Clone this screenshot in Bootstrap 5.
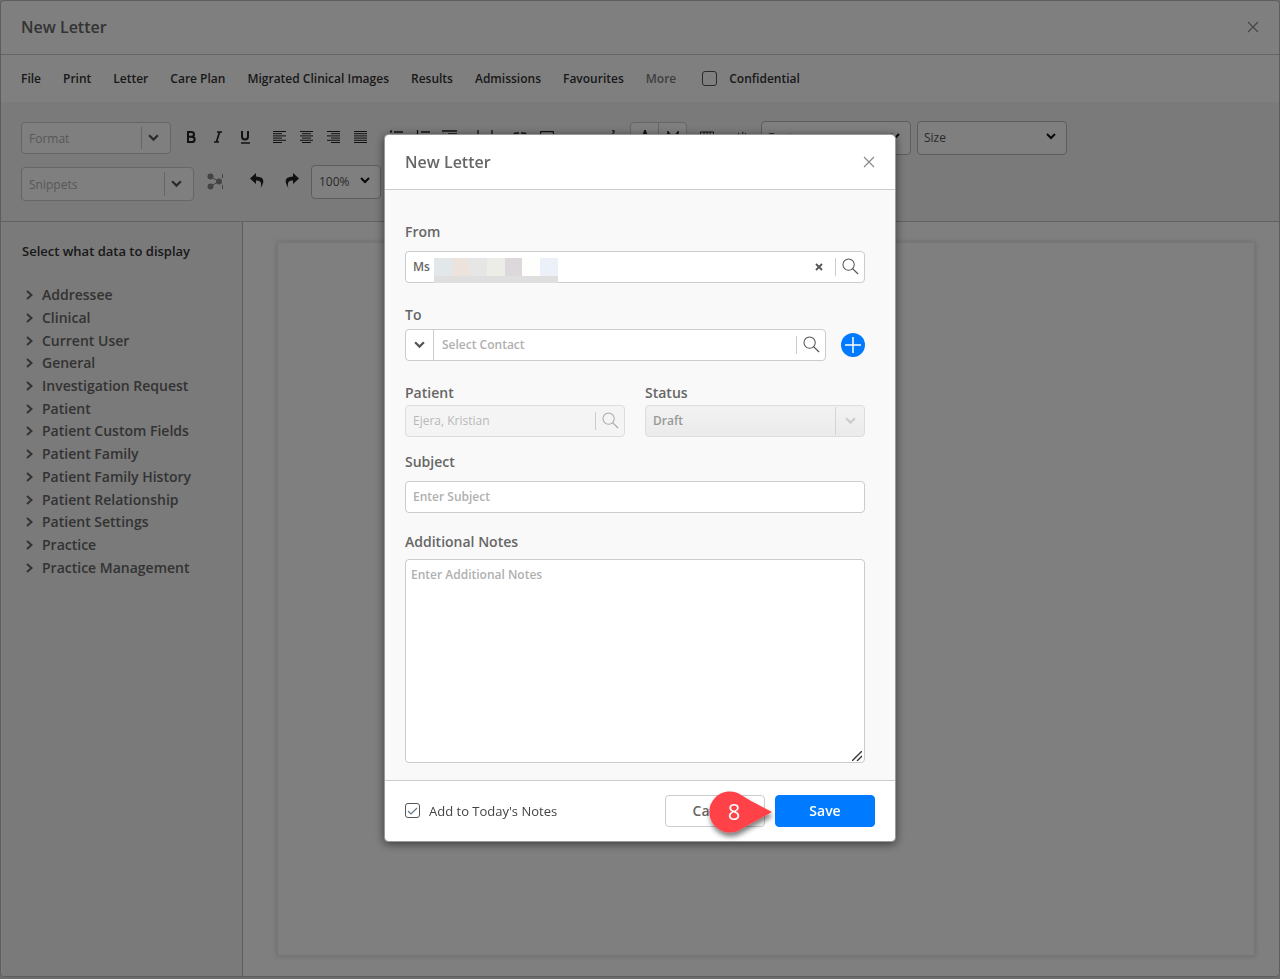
<!DOCTYPE html>
<html lang="en">
<head>
<meta charset="utf-8">
<meta name="viewport" content="width=device-width, initial-scale=1">
<title>New Letter</title>
<link rel="stylesheet" href="https://cdn.jsdelivr.net/npm/bootstrap@5.3.0/dist/css/bootstrap.min.css">
<style>
body{font-family:"Open Sans","Noto Sans",sans-serif;font-size:12px;line-height:20px;color:#222;background:#d8d8d8;min-height:100vh;padding-bottom:2px}
svg{display:block;flex:none}
.win{flex:1;background:#fff;border:1px solid #bbb;border-radius:4px;overflow:hidden}
.win-head{height:54px;padding:0 20px 1px;border-bottom:1px solid #c8c8c8}
.win-title{font-size:16px;line-height:24px;font-weight:600;color:#666;margin:0}
.icon-btn{background:none;border:0;padding:0;display:flex;align-items:center;justify-content:center;color:#555}
.close-btn{color:#888}
.menu-bar{height:47px;padding:0 20px;gap:22px;font-weight:600}
.menu-bar a,.menu-bar label{color:#333;text-decoration:none}
.menu-bar a.menu-more{color:#808080}
.tick{width:15px;height:15px;margin:0;border:1px solid #555;border-radius:3px;background-color:#fff}
.tick:checked{background-color:#fff;border-color:#555;background-size:13px 13px;background-image:url("data:image/svg+xml,%3Csvg xmlns='http://www.w3.org/2000/svg' viewBox='0 0 13 13'%3E%3Cpath d='M2 7l3 3 6-6' fill='none' stroke='%23678' stroke-width='1.2'/%3E%3C/svg%3E")}
.tools{background:#f4f4f4;height:120px;padding:19px 20px 0;border-bottom:1px solid #c4c4c4}
.tool-row{height:34px;margin-bottom:10px}
.tool{width:27px;height:28px;color:#222;padding-bottom:2px}
.near{margin-left:6px}
.mid{margin-left:14px}
.field{height:32px;border:1px solid #ccc;border-radius:4px;background:#fff;display:flex;align-items:center}
.field input{flex:1;min-width:0;border:0;background:none;padding:1px 0 0 7px;font-size:12px;line-height:20px;outline:0;color:#666}
.field input::placeholder,.notes::placeholder{color:#b0b0b0;opacity:1}
.cut{border-left:1px solid #ccc;align-self:stretch}
.combo-sm{width:150px}
.combo-md{width:173px;height:34px}
.combo-btn{width:28px;padding-right:5px}
.pick{height:34px;border:1px solid #bbb;border-radius:4px;background-color:#fff;font-size:12px;color:#555;padding:0 6px;background-image:url("data:image/svg+xml,%3Csvg xmlns='http://www.w3.org/2000/svg' viewBox='0 0 10 7'%3E%3Cpath d='M1 1l4 4 4-4' fill='none' stroke='%23111' stroke-width='2'/%3E%3C/svg%3E");background-size:10px 7px;background-position:right 10px top 11px}
.pick-wide{width:150px}
.pick-zoom{width:70px;padding-left:7px}
.side{width:241px;flex:none;background:#f4f4f4;border-right:1px solid #bbb;padding:19px 20px;margin-left:1px}
.side h2{font-size:13px;line-height:20px;font-weight:600;margin:0 0 23px;color:#333}
.tree{height:295px;font-size:14px}
.tree button{gap:8px;color:#666;padding-left:4px;font-weight:600}
.desk{padding:20px 24px 20px 34px}
.paper{background:#fff;border:1px solid #ececec;box-shadow:0 0 6px #d4d4d4}
.modal{padding-bottom:4px}
.dialog-w{max-width:512px}
.modal-content{border:1px solid #999;border-radius:4px;box-shadow:0 2px 10px rgba(0,0,0,.55)}
.modal-header{height:55px;padding:0 20px;border-bottom:1px solid #ccc}
.modal-body{background:#f9f9f9;padding:32px 30px 17px 20px}
.modal-footer{height:61px;padding:0 20px;border-top:1px solid #ccc;gap:10px}
.modal-footer>*{margin:0}
.lab{display:block;font-size:14px;line-height:20px;font-weight:600;color:#666}
.dlg-field input{font-weight:600}
.from-field,.subj-lab + .field{margin-top:9px}
.to-lab{margin:22px 0 4px}
.add-btn{margin-left:15px}
.pair{--bs-gutter-x:20px;margin-top:22px}
.pair .field,.status-box{margin-top:2px}
.subj-lab{margin-top:15px}
.notes-lab{margin:19px 0 7px}
.mark-line{width:1px;height:18px;background:#ccc}
.find{width:28px;height:30px}
.type-btn{width:27px}
.off{background:#f4f4f4;border-color:#ddd}
.off input{color:#b8b8b8}
.off .find{color:#aaa}
.draft{width:100%;height:32px;border:1px solid #ddd;border-radius:4px;background:linear-gradient(#f2f2f2,#ebebeb);color:#999;font-size:12px;font-weight:600;padding:1px 7px 0;opacity:1;appearance:none}
.draft-arrow{right:1px;top:2px;height:28px;width:29px;border-left:1px solid #d4d4d4;color:#ccc;pointer-events:none}
.notes{display:block;width:100%;height:204px;border:1px solid #ccc;border-radius:4px;padding:5px;font-size:12px;line-height:20px;font-weight:600;resize:none}
.grip{right:3px;bottom:2px}
.redacted{left:28px;top:6px}
.today-lab{font-size:13px;margin-left:9px;color:#444}
.act{width:100px;height:32px;padding:0;font-size:14px;line-height:20px;border-radius:4px;font-weight:600}
.act-cancel{background:#fff;border:1px solid #ccc;color:#666}
.act-save{background:#007bff;border-color:#007bff;color:#fff}
.callout{left:44px;top:-5px;pointer-events:none}
.callout span{left:18px;top:7px;width:14px;font-size:22px;line-height:28px;color:#fff;text-align:center}
</style>
</head>
<body class="d-flex flex-column">
<svg width="0" height="0" class="position-absolute" aria-hidden="true">
  <symbol id="down" viewBox="0 0 10 7"><path d="M1 1l4 4 4-4" fill="none" stroke="currentColor" stroke-width="2"/></symbol>
  <symbol id="right" viewBox="0 0 8 10"><path d="M1 1L5.500 5L1 9" fill="none" stroke="currentColor" stroke-width="2"/></symbol>
  <symbol id="close" viewBox="0 0 12 12"><path d="M1 1l10 10M11 1L1 11" fill="none" stroke="currentColor" stroke-width="1.100"/></symbol>
  <symbol id="search" viewBox="0 0 18 18"><circle cx="7" cy="7" r="6" fill="none" stroke="currentColor" stroke-width="1.100"/><path d="M11.200 11.200L17 17" fill="none" stroke="currentColor" stroke-width="1.300"/></symbol>
</svg>

<div class="win d-flex flex-column">
  <header class="win-head d-flex align-items-center justify-content-between">
    <h1 class="win-title">New Letter</h1>
    <button class="icon-btn close-btn" aria-label="Close window"><svg width="12" height="12"><use href="#close"/></svg></button>
  </header>
  <nav class="menu-bar d-flex align-items-center" aria-label="Letter menu">
    <a href="#">File</a><a href="#">Print</a><a href="#">Letter</a><a href="#">Care Plan</a><a href="#">Migrated Clinical Images</a><a href="#">Results</a><a href="#">Admissions</a><a href="#">Favourites</a><a href="#" class="menu-more">More</a>
    <span class="d-flex align-items-center ms-1"><input class="form-check-input tick" type="checkbox" id="conf"><label for="conf" class="ps-1 ms-2">Confidential</label></span>
  </nav>

  <div class="tools">
    <div class="tool-row d-flex align-items-center">
      <div class="field combo-sm"><input aria-label="Format" placeholder="Format"><span class="cut my-1"></span><button class="icon-btn combo-btn" aria-label="Format options"><svg width="11" height="8"><use href="#down"/></svg></button></div>
      <button class="icon-btn tool near" aria-label="Bold"><svg width="10" height="12" viewBox="0 0 10 12"><path d="M2 1h3q3 0 3 2.400t-3 2.400H2h3.400q3.300 0 3.300 2.600T5.400 11H2z" fill="none" stroke="currentColor" stroke-width="2"/></svg></button>
      <button class="icon-btn tool" aria-label="Italic"><svg width="10" height="12" viewBox="0 0 10 12"><path d="M4 1h5M1 11h5M6.500 1l-3 10" fill="none" stroke="currentColor" stroke-width="1.700"/></svg></button>
      <button class="icon-btn tool" aria-label="Underline"><svg width="10" height="13" viewBox="0 0 10 13"><path d="M2 0v5.500q0 3 3 3t3-3V0" fill="none" stroke="currentColor" stroke-width="2"/><path d="M1 12h9" stroke="currentColor" stroke-width="1.400"/></svg></button>
      <button class="icon-btn tool ms-2" aria-label="Align left"><svg width="13" height="12" viewBox="0 0 13 12"><path d="M0 .5h13M0 2.700h9M0 4.900h13M0 7.100h9M0 9.300h13M0 11.500h9" stroke="currentColor"/></svg></button>
      <button class="icon-btn tool" aria-label="Align centre"><svg width="13" height="12" viewBox="0 0 13 12"><path d="M0 .5h13M2 2.700h9M0 4.900h13M2 7.100h9M0 9.300h13M2 11.500h9" stroke="currentColor"/></svg></button>
      <button class="icon-btn tool" aria-label="Align right"><svg width="13" height="12" viewBox="0 0 13 12"><path d="M0 .5h13M4 2.700h9M0 4.900h13M4 7.100h9M0 9.300h13M4 11.500h9" stroke="currentColor"/></svg></button>
      <button class="icon-btn tool" aria-label="Justify"><svg width="13" height="12" viewBox="0 0 13 12"><path d="M0 .5h13M0 2.700h13M0 4.900h13M0 7.100h13M0 9.300h13M0 11.500h13" stroke="currentColor"/></svg></button>
      <button class="icon-btn tool ms-2" aria-label="Bullet list"><svg width="14" height="14" viewBox="0 0 14 14"><path d="M5 2h9M5 7h9M5 12h9" stroke="currentColor" stroke-width="1.500"/><path d="M1 1.500h2M1 7h2M1 12h2" stroke="currentColor" stroke-width="2"/></svg></button>
      <button class="icon-btn tool" aria-label="Numbered list"><svg width="14" height="14" viewBox="0 0 14 14"><path d="M5 2h9M5 7h9M5 12h9M1.500 0v5M1.500 8v5" stroke="currentColor" stroke-width="1.300"/></svg></button>
      <button class="icon-btn tool" aria-label="Indent"><svg width="15" height="14" viewBox="0 0 15 14"><path d="M0 1h15M6 4h9M6 7h9M0 11h15M1 4l3 2-3 2" fill="none" stroke="currentColor" stroke-width="1.500"/></svg></button>
      <button class="icon-btn tool ms-2" aria-label="Page break"><svg width="16" height="14" viewBox="0 0 16 14"><path d="M1 0v14M15 0v14M4 7h8" stroke="currentColor" stroke-width="1.300"/></svg></button>
      <button class="icon-btn tool ms-2" aria-label="Link"><svg width="14" height="10" viewBox="0 0 14 10"><path d="M6 7H3.500a3 3 0 010-6H6M8 1h2.500a3 3 0 010 6H8" fill="none" stroke="currentColor" stroke-width="1.500"/></svg></button>
      <button class="icon-btn tool" aria-label="Image"><svg width="14" height="12" viewBox="0 0 14 12"><rect x=".5" y=".5" width="13" height="11" rx="1" fill="none" stroke="currentColor" stroke-width="1.300"/></svg></button>
      <button class="icon-btn tool ms-2" aria-label="Subscript"><svg width="14" height="14" viewBox="0 0 14 14"><path d="M1 5l6 6M7 5l-6 6M10 9q3-1 2 1l-2 3h3" fill="none" stroke="currentColor" stroke-width="1.200"/></svg></button>
      <button class="icon-btn tool" aria-label="Superscript"><svg width="14" height="14" viewBox="0 0 14 14"><path d="M1 5l6 6M7 5l-6 6M10 1q3-1 2 1l-2 3h3" fill="none" stroke="currentColor" stroke-width="1.200"/></svg></button>
      <div class="field ms-2" role="group" aria-label="Colours"><button class="icon-btn tool" aria-label="Text colour"><svg width="12" height="14" viewBox="0 0 12 14"><path d="M2 11L6 1l4 10M4 8h4" fill="none" stroke="currentColor" stroke-width="2"/></svg></button><span class="cut"></span><button class="icon-btn tool" aria-label="Highlight"><svg width="12" height="12" viewBox="0 0 12 12"><path d="M1 11V1l5 7 5-7v10" fill="none" stroke="currentColor" stroke-width="1.600"/></svg></button></div>
      <button class="icon-btn tool near" aria-label="Table"><svg width="14" height="13" viewBox="0 0 14 13"><path d="M.5 1h13v11H.5zM4 1v12M7 1v12M10 1v12" fill="none" stroke="currentColor"/></svg></button>
      <button class="icon-btn tool ms-2" aria-label="Source"><svg width="14" height="12" viewBox="0 0 14 12"><path d="M4 2L1 6l3 4M10 2l3 4-3 4M8 1L6 11" fill="none" stroke="currentColor"/></svg></button>
      <select class="form-select pick pick-wide near" aria-label="Font"><option>Font</option></select>
      <select class="form-select pick pick-wide near" aria-label="Size"><option>Size</option></select>
    </div>
    <div class="tool-row d-flex align-items-center">
      <div class="field combo-md mt-1"><input aria-label="Snippets" placeholder="Snippets"><span class="cut my-1"></span><button class="icon-btn combo-btn" aria-label="Snippet options"><svg width="11" height="8"><use href="#down"/></svg></button></div>
      <button class="icon-btn tool ms-2" aria-label="Connections"><svg width="17" height="17" viewBox="0 0 17 17" fill="#888"><path d="M3 3.500l9 5-9 5" fill="none" stroke="#888"/><circle cx="3.500" cy="3.500" r="3"/><circle cx="3.500" cy="13.500" r="3"/><circle cx="12" cy="8.500" r="3"/><path d="M15.500 1v4M15.500 12v4" stroke="#888"/></svg></button>
      <button class="icon-btn tool mid" aria-label="Undo"><svg width="14" height="16" viewBox="0 0 14 16"><path d="M6 0L0 5.500 6 11V7.500Q13 7 10.500 15.500 18 4 6 3.500z" fill="currentColor"/></svg></button>
      <button class="icon-btn tool ms-2" aria-label="Redo"><svg width="14" height="16" viewBox="0 0 14 16"><path d="M8 0l6 5.500L8 11V7.500Q1 7 3.500 15.500-4 4 8 3.500z" fill="currentColor"/></svg></button>
      <select class="form-select pick pick-zoom near" aria-label="Zoom"><option>100%</option></select>
    </div>
  </div>

  <div class="d-flex flex-fill">
    <aside class="side">
      <h2>Select what data to display</h2>
      <ul class="tree list-unstyled d-flex flex-column mb-0">
        <li class="d-flex flex-fill"><button class="icon-btn"><svg width="8" height="10"><use href="#right"/></svg>Addressee</button></li>
        <li class="d-flex flex-fill"><button class="icon-btn"><svg width="8" height="10"><use href="#right"/></svg>Clinical</button></li>
        <li class="d-flex flex-fill"><button class="icon-btn"><svg width="8" height="10"><use href="#right"/></svg>Current User</button></li>
        <li class="d-flex flex-fill"><button class="icon-btn"><svg width="8" height="10"><use href="#right"/></svg>General</button></li>
        <li class="d-flex flex-fill"><button class="icon-btn"><svg width="8" height="10"><use href="#right"/></svg>Investigation Request</button></li>
        <li class="d-flex flex-fill"><button class="icon-btn"><svg width="8" height="10"><use href="#right"/></svg>Patient</button></li>
        <li class="d-flex flex-fill"><button class="icon-btn"><svg width="8" height="10"><use href="#right"/></svg>Patient Custom Fields</button></li>
        <li class="d-flex flex-fill"><button class="icon-btn"><svg width="8" height="10"><use href="#right"/></svg>Patient Family</button></li>
        <li class="d-flex flex-fill"><button class="icon-btn"><svg width="8" height="10"><use href="#right"/></svg>Patient Family History</button></li>
        <li class="d-flex flex-fill"><button class="icon-btn"><svg width="8" height="10"><use href="#right"/></svg>Patient Relationship</button></li>
        <li class="d-flex flex-fill"><button class="icon-btn"><svg width="8" height="10"><use href="#right"/></svg>Patient Settings</button></li>
        <li class="d-flex flex-fill"><button class="icon-btn"><svg width="8" height="10"><use href="#right"/></svg>Practice</button></li>
        <li class="d-flex flex-fill"><button class="icon-btn"><svg width="8" height="10"><use href="#right"/></svg>Practice Management</button></li>
      </ul>
    </aside>
    <main class="desk d-flex flex-fill"><div class="paper flex-fill"></div></main>
  </div>
</div>

<div class="modal-backdrop show"></div>
<div class="modal d-block" role="dialog" aria-modal="true" aria-labelledby="dlg-title">
  <div class="modal-dialog modal-dialog-centered dialog-w">
    <div class="modal-content">
      <div class="modal-header">
        <h2 class="win-title" id="dlg-title">New Letter</h2>
        <button class="icon-btn close-btn" aria-label="Close"><svg width="12" height="12"><use href="#close"/></svg></button>
      </div>
      <form class="modal-body">
        <label class="lab" for="from">From</label>
        <div class="field dlg-field position-relative from-field">
          <input id="from" value="Ms">
          <svg class="redacted position-absolute" width="124" height="25" viewBox="0 0 124 25" shape-rendering="crispEdges" aria-hidden="true"><path fill="#e2e8ea" d="M0 0h18v18H0z"/><path fill="#ece4dc" d="M18 0h17v18H18z"/><path fill="#e7e6e6" d="M35 0h18v18H35z"/><path fill="#edede8" d="M53 0h18v18H53z"/><path fill="#dcd8dc" d="M71 0h17v18H71z"/><path fill="#fefefc" d="M88 0h18v18H88z"/><path fill="#ecf0f9" d="M106 0h18v18h-18z"/><path fill="#dfdfdf" d="M0 18h124v7H0z"/></svg>
          <button type="button" class="icon-btn me-2 pe-1" aria-label="Clear"><svg width="8" height="8" viewBox="0 0 8 8"><path d="M1 1l6 6M7 1L1 7" stroke="currentColor" stroke-width="1.800"/></svg></button>
          <span class="mark-line"></span>
          <button type="button" class="icon-btn find" aria-label="Search sender"><svg width="17" height="17"><use href="#search"/></svg></button>
        </div>
        <label class="lab to-lab" for="to">To</label>
        <div class="d-flex align-items-center">
          <div class="field dlg-field flex-fill"><button type="button" class="icon-btn find type-btn" aria-label="Contact type"><svg width="11" height="8"><use href="#down"/></svg></button><span class="cut"></span><input id="to" class="ps-2" placeholder="Select Contact"><span class="mark-line"></span><button type="button" class="icon-btn find" aria-label="Search contact"><svg width="17" height="17"><use href="#search"/></svg></button></div>
          <button type="button" class="icon-btn add-btn" aria-label="Add contact"><svg width="24" height="24" viewBox="0 0 24 24"><circle cx="12" cy="12" r="12" fill="#007bff"/><path d="M4 12h16M12 4v16" stroke="#fff" stroke-width="1.500"/></svg></button>
        </div>
        <div class="row pair">
          <div class="col-6">
            <label class="lab" for="patient">Patient</label>
            <div class="field off"><input id="patient" value="Ejera, Kristian" disabled><span class="mark-line"></span><button type="button" class="icon-btn find" disabled aria-label="Search patient"><svg width="17" height="17"><use href="#search"/></svg></button></div>
          </div>
          <div class="col-6">
            <label class="lab" for="status">Status</label>
            <div class="position-relative status-box"><select id="status" class="draft" disabled><option>Draft</option></select><span class="draft-arrow position-absolute d-flex align-items-center justify-content-center"><svg width="11" height="8"><use href="#down"/></svg></span></div>
          </div>
        </div>
        <label class="lab subj-lab" for="subject">Subject</label>
        <div class="field dlg-field"><input id="subject" placeholder="Enter Subject"></div>
        <label class="lab notes-lab" for="notes">Additional Notes</label>
        <div class="position-relative"><textarea id="notes" class="notes" placeholder="Enter Additional Notes"></textarea><svg class="grip position-absolute" width="10" height="10" viewBox="0 0 10 10"><path d="M0 10L10 0M5 10l5-5" stroke="#333" stroke-width="1.400"/></svg></div>
      </form>
      <div class="modal-footer">
        <div class="d-flex align-items-center me-auto"><input class="form-check-input tick" type="checkbox" id="today" checked><label for="today" class="today-lab">Add to Today's Notes</label></div>
        <div class="position-relative"><button class="btn act act-cancel">Cancel</button>
          <div class="callout position-absolute"><svg width="72" height="52" viewBox="0 0 72 52" overflow="visible"><defs><filter id="sh" x="-20%" y="-20%" width="140%" height="150%"><feDropShadow dx="1" dy="4" stdDeviation="2.500" flood-opacity=".5"/></filter></defs><path d="M63 22L33 38.500A20.500 20.500 0 1 1 33 5.500Q38 9 63 22z" fill="#fe4246" filter="url(#sh)"/></svg><span class="position-absolute">8</span></div>
        </div>
        <button class="btn act act-save">Save</button>
      </div>
    </div>
  </div>
</div>
<script src="https://cdn.jsdelivr.net/npm/bootstrap@5.3.0/dist/js/bootstrap.bundle.min.js"></script>
</body>
</html>
